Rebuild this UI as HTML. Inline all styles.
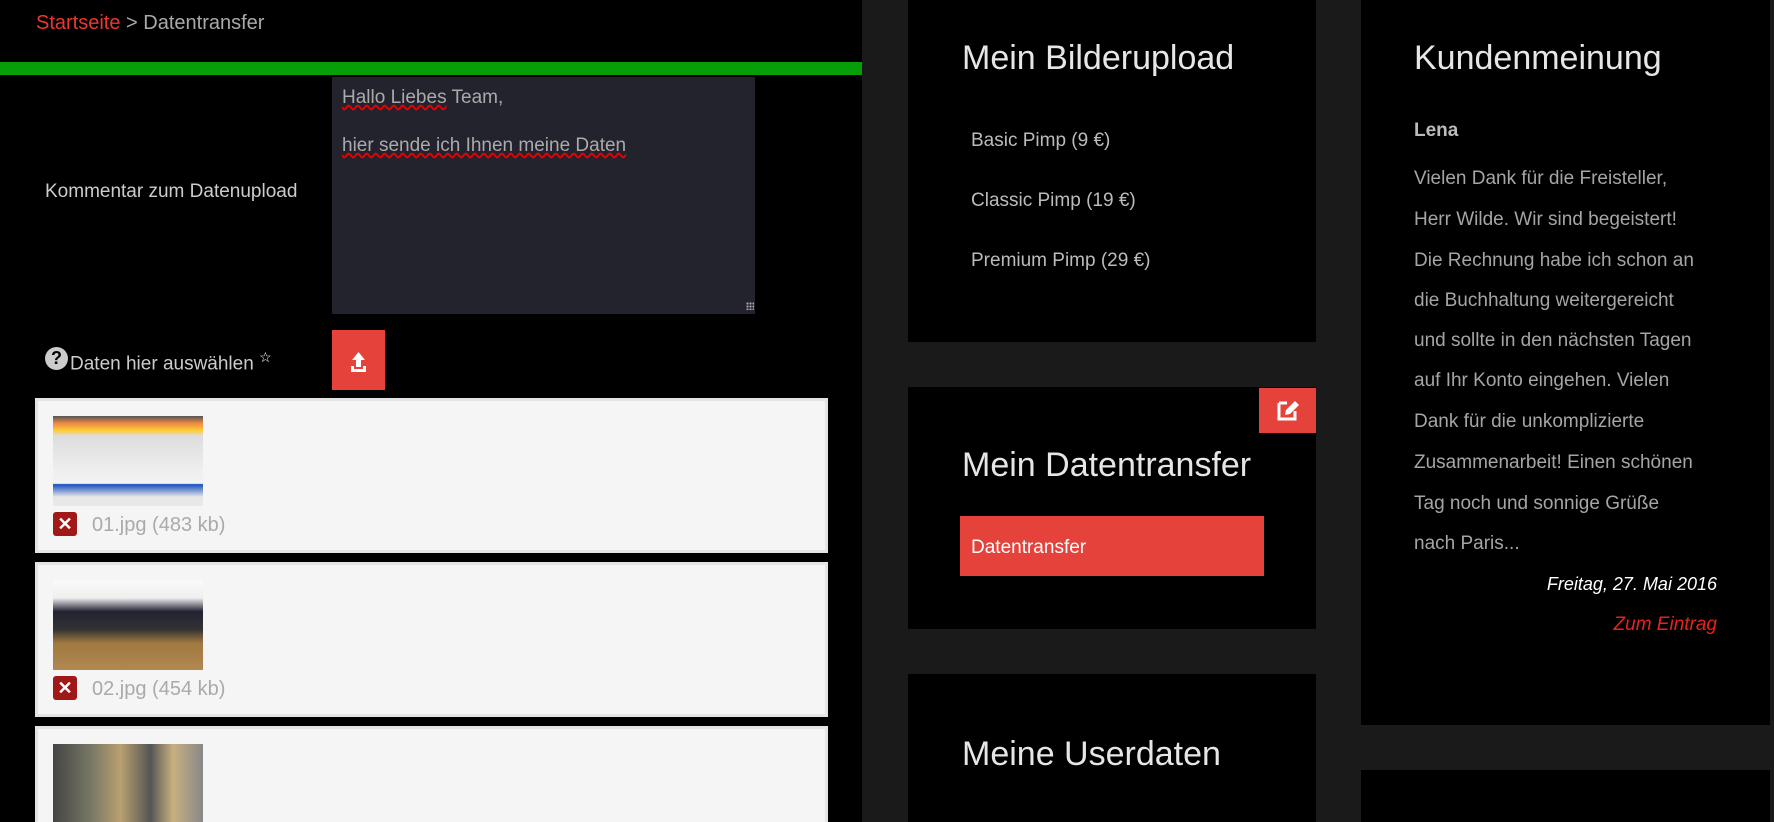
<!DOCTYPE html>
<html><head><meta charset="utf-8"><style>
*{margin:0;padding:0;box-sizing:border-box}
html,body{width:1774px;height:822px;overflow:hidden}
body{background:#1a1a1a;font-family:"Liberation Sans Narrow","Liberation Sans",sans-serif;position:relative}
.a{position:absolute}
.left{left:0;top:0;width:862px;height:822px;background:#000}
.t{white-space:nowrap;line-height:1}
.card{left:35px;width:793px;background:#f5f5f5;border:3px solid #e4e4e4}
.thumb{left:15px;top:15px;width:150px;height:90px}
.x{left:15px;width:24px;height:24px;background:#a01818;border-radius:3px;color:#fff;font:bold 18px/24px "Liberation Sans",sans-serif;text-align:center}
.fn{left:54px;color:#aaa;font-size:20px}
.box{background:#000}
h2{font-weight:normal;color:#e6e6e6;font-size:34px;position:absolute;white-space:nowrap;line-height:1}
.it{color:#bbb;font-size:19px}
.q{color:#a5a5a5;font-size:19px;left:1414px}
</style></head><body>
<div class="a left"></div>
<div class="a t" style="left:36px;top:13px;font-size:20px"><span style="color:#e8392e">Startseite</span><span style="color:#aaa"> &gt; Datentransfer</span></div>
<div class="a" style="left:0;top:62px;width:862px;height:13px;background:#079e07"></div>
<div class="a" style="left:332px;top:77px;width:423px;height:237px;background:#23232d"></div>
<div class="a t" style="left:342px;top:88px;font-size:19px;color:#aaa"><span style="text-decoration:underline wavy #e00">Hallo Liebes</span> Team,</div>
<div class="a t" style="left:342px;top:136px;font-size:19px;color:#aaa;text-decoration:underline wavy #e00">hier sende ich Ihnen meine Daten</div>
<div class="a" style="left:746px;top:302px;width:8px;height:8px;background:radial-gradient(#aaa 1px,transparent 1.2px) 0 0/3px 3px"></div>
<div class="a t" style="left:45px;top:182px;font-size:19px;color:#ccc">Kommentar zum Datenupload</div>
<div class="a" style="left:45px;top:347px;width:23px;height:23px;border-radius:50%;background:#ccc;color:#000;font:bold 18px/23px 'Liberation Sans',sans-serif;text-align:center">?</div>
<div class="a t" style="left:70px;top:350px;font-size:19px;color:#ccc">Daten hier auswählen <sup style="font-size:14px;color:#fff">☆</sup></div>
<div class="a" style="left:332px;top:330px;width:53px;height:60px;background:#e4423a">
<svg width="53" height="60" viewBox="0 0 53 60"><path d="M26.5 22 L20 30 H24 V37 H29 V30 H33 Z M19 36 V42 H34 V36 H31 V39 H22 V36 Z" fill="#fff"/></svg></div>

<div class="a card" style="top:398px;height:155px">
<div class="a thumb" style="background:linear-gradient(180deg,#555 0,#e84 8%,#fc3 16%,#ddd 22%,#eee 60%,#f3f3f3 75%,#1850c0 76%,#e8e8e8 90%)"></div>
<div class="a x" style="top:111px">✕</div><div class="a t fn" style="top:114px">01.jpg (483 kb)</div></div>
<div class="a card" style="top:562px;height:155px">
<div class="a thumb" style="background:linear-gradient(180deg,#fafafa 0,#eee 20%,#223 35%,#333 55%,#a07840 70%,#b08850 100%)"></div>
<div class="a x" style="top:111px">✕</div><div class="a t fn" style="top:114px">02.jpg (454 kb)</div></div>
<div class="a card" style="top:726px;height:110px;border-bottom:none">
<div class="a thumb" style="height:100px;background:linear-gradient(90deg,#444 0,#776 25%,#b9a070 45%,#555 65%,#c8b080 80%,#888 100%)"></div></div>

<div class="a box" style="left:908px;top:0;width:408px;height:342px"></div>
<h2 style="left:962px;top:41px">Mein Bilderupload</h2>
<div class="a t it" style="left:971px;top:131px">Basic Pimp (9 €)</div>
<div class="a t it" style="left:971px;top:191px">Classic Pimp (19 €)</div>
<div class="a t it" style="left:971px;top:251px">Premium Pimp (29 €)</div>

<div class="a box" style="left:908px;top:387px;width:408px;height:242px"></div>
<div class="a" style="left:1259px;top:388px;width:57px;height:45px;background:#e4423a">
<svg width="57" height="45" viewBox="0 0 57 45"><path d="M20 15 H28 M20 15 V31 H36 V23" stroke="#fff" stroke-width="3" fill="none"/><path d="M26 27 L27 22 L36 13 L40 17 L31 26 Z" fill="#fff"/></svg></div>
<h2 style="left:962px;top:448px">Mein Datentransfer</h2>
<div class="a" style="left:960px;top:516px;width:304px;height:60px;background:#e4423a"></div>
<div class="a t" style="left:971px;top:538px;font-size:19px;color:#fff">Datentransfer</div>

<div class="a box" style="left:908px;top:674px;width:408px;height:160px"></div>
<h2 style="left:962px;top:737px">Meine Userdaten</h2>

<div class="a box" style="left:1361px;top:0;width:409px;height:725px"></div>
<h2 style="left:1414px;top:41px">Kundenmeinung</h2>
<div class="a t" style="left:1414px;top:121px;font-size:19px;color:#bbb;font-weight:bold">Lena</div>
<div class="a t q" style="top:169px">Vielen Dank für die Freisteller,</div>
<div class="a t q" style="top:210px">Herr Wilde. Wir sind begeistert!</div>
<div class="a t q" style="top:251px">Die Rechnung habe ich schon an</div>
<div class="a t q" style="top:291px">die Buchhaltung weitergereicht</div>
<div class="a t q" style="top:331px">und sollte in den nächsten Tagen</div>
<div class="a t q" style="top:371px">auf Ihr Konto eingehen. Vielen</div>
<div class="a t q" style="top:412px">Dank für die unkomplizierte</div>
<div class="a t q" style="top:453px">Zusammenarbeit! Einen schönen</div>
<div class="a t q" style="top:494px">Tag noch und sonnige Grüße</div>
<div class="a t q" style="top:534px">nach Paris...</div>
<div class="a t" style="right:57px;top:575px;font-size:18px;color:#fff;font-style:italic">Freitag, 27. Mai 2016</div>
<div class="a t" style="right:57px;top:615px;font-size:19px;color:#e8221a;font-style:italic">Zum Eintrag</div>
<div class="a box" style="left:1361px;top:770px;width:409px;height:52px"></div>
</body></html>
